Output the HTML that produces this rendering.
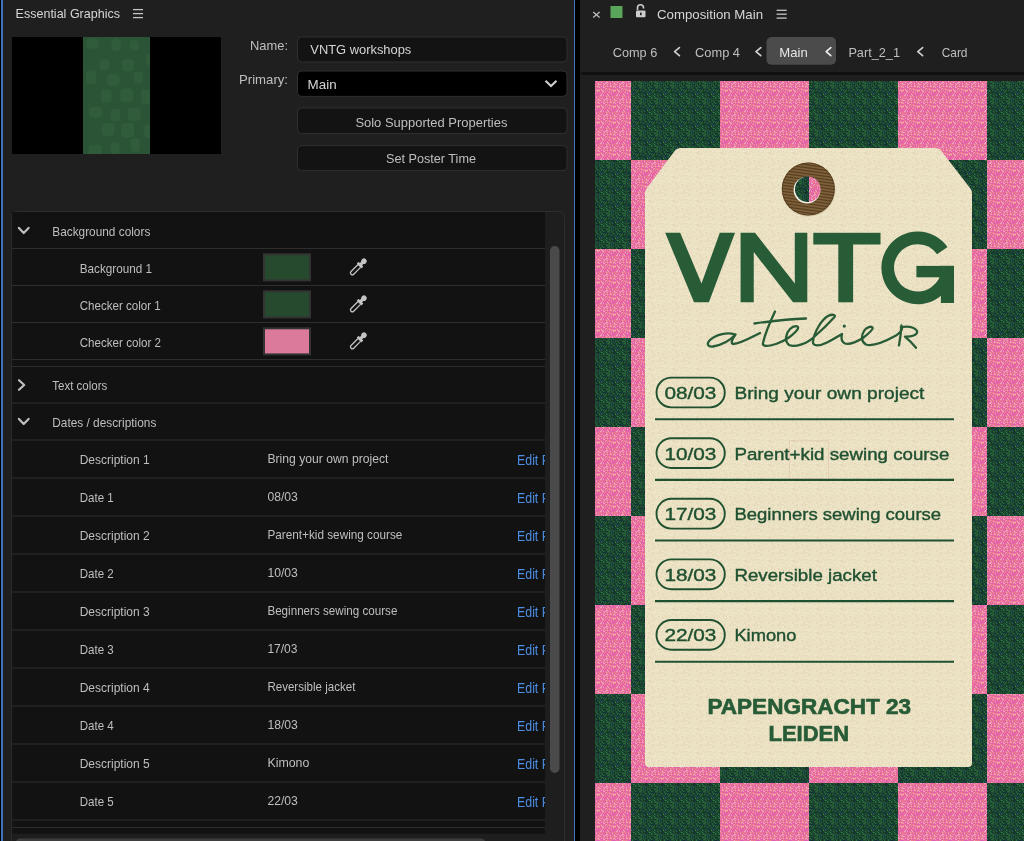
<!DOCTYPE html><html><head><meta charset="utf-8"><title>Essential Graphics</title>
<style>html,body{margin:0;padding:0;background:#000;overflow:hidden}body{width:1024px;height:841px;position:relative}svg{display:block;position:absolute;left:0;top:0;will-change:transform}text{font-family:"Liberation Sans",sans-serif}</style></head><body>
<svg width="1024" height="841" viewBox="0 0 1024 841">
<defs><pattern id="pinkTex" width="16" height="16" patternUnits="userSpaceOnUse"><rect width="16" height="16" fill="#e668a2"/><rect x="0" y="0" width="1" height="1" fill="#e872a6"/><rect x="1" y="0" width="1" height="1" fill="#ec888c"/><rect x="2" y="0" width="1" height="1" fill="#e872a6"/><rect x="3" y="0" width="1" height="1" fill="#e872a6"/><rect x="4" y="0" width="1" height="1" fill="#ec888c"/><rect x="5" y="0" width="1" height="1" fill="#e466a8"/><rect x="6" y="0" width="1" height="1" fill="#ee8484"/><rect x="7" y="0" width="1" height="1" fill="#ea7496"/><rect x="8" y="0" width="1" height="1" fill="#ec888c"/><rect x="9" y="0" width="1" height="1" fill="#e872a6"/><rect x="10" y="0" width="1" height="1" fill="#e466a8"/><rect x="11" y="0" width="1" height="1" fill="#ea7496"/><rect x="13" y="0" width="1" height="1" fill="#e872a6"/><rect x="14" y="0" width="1" height="1" fill="#f0a0c4"/><rect x="15" y="0" width="1" height="1" fill="#ea7496"/><rect x="1" y="1" width="1" height="1" fill="#ec888c"/><rect x="3" y="1" width="1" height="1" fill="#e466a8"/><rect x="4" y="1" width="1" height="1" fill="#f0a8b8"/><rect x="5" y="1" width="1" height="1" fill="#e872a6"/><rect x="6" y="1" width="1" height="1" fill="#e466a8"/><rect x="7" y="1" width="1" height="1" fill="#ea7496"/><rect x="8" y="1" width="1" height="1" fill="#e466a8"/><rect x="10" y="1" width="1" height="1" fill="#ec888c"/><rect x="14" y="1" width="1" height="1" fill="#ee8484"/><rect x="15" y="1" width="1" height="1" fill="#ee8484"/><rect x="0" y="2" width="1" height="1" fill="#e466a8"/><rect x="2" y="2" width="1" height="1" fill="#e872a6"/><rect x="3" y="2" width="1" height="1" fill="#e05cb4"/><rect x="4" y="2" width="1" height="1" fill="#e872a6"/><rect x="5" y="2" width="1" height="1" fill="#e466a8"/><rect x="6" y="2" width="1" height="1" fill="#ee8484"/><rect x="7" y="2" width="1" height="1" fill="#ec888c"/><rect x="8" y="2" width="1" height="1" fill="#ee8484"/><rect x="9" y="2" width="1" height="1" fill="#f0a0c4"/><rect x="10" y="2" width="1" height="1" fill="#e872a6"/><rect x="13" y="2" width="1" height="1" fill="#e872a6"/><rect x="14" y="2" width="1" height="1" fill="#f0a0c4"/><rect x="15" y="2" width="1" height="1" fill="#f0a8b8"/><rect x="0" y="3" width="1" height="1" fill="#ec888c"/><rect x="2" y="3" width="1" height="1" fill="#f0a0c4"/><rect x="3" y="3" width="1" height="1" fill="#e05cb4"/><rect x="4" y="3" width="1" height="1" fill="#ee8484"/><rect x="5" y="3" width="1" height="1" fill="#ec888c"/><rect x="6" y="3" width="1" height="1" fill="#f0a0c4"/><rect x="9" y="3" width="1" height="1" fill="#e466a8"/><rect x="11" y="3" width="1" height="1" fill="#f0a8b8"/><rect x="13" y="3" width="1" height="1" fill="#f0a0c4"/><rect x="14" y="3" width="1" height="1" fill="#f0a8b8"/><rect x="2" y="4" width="1" height="1" fill="#ee8484"/><rect x="3" y="4" width="1" height="1" fill="#ee8484"/><rect x="5" y="4" width="1" height="1" fill="#e872a6"/><rect x="6" y="4" width="1" height="1" fill="#f0a8b8"/><rect x="7" y="4" width="1" height="1" fill="#f0a8b8"/><rect x="8" y="4" width="1" height="1" fill="#f0a8b8"/><rect x="10" y="4" width="1" height="1" fill="#e466a8"/><rect x="11" y="4" width="1" height="1" fill="#ee8484"/><rect x="12" y="4" width="1" height="1" fill="#f0a0c4"/><rect x="13" y="4" width="1" height="1" fill="#e05cb4"/><rect x="15" y="4" width="1" height="1" fill="#f0a0c4"/><rect x="0" y="5" width="1" height="1" fill="#e05cb4"/><rect x="2" y="5" width="1" height="1" fill="#f0a8b8"/><rect x="4" y="5" width="1" height="1" fill="#ea7496"/><rect x="5" y="5" width="1" height="1" fill="#ee8484"/><rect x="9" y="5" width="1" height="1" fill="#e872a6"/><rect x="10" y="5" width="1" height="1" fill="#e872a6"/><rect x="11" y="5" width="1" height="1" fill="#ea7496"/><rect x="12" y="5" width="1" height="1" fill="#ec888c"/><rect x="13" y="5" width="1" height="1" fill="#ee8484"/><rect x="14" y="5" width="1" height="1" fill="#e872a6"/><rect x="15" y="5" width="1" height="1" fill="#ec888c"/><rect x="0" y="6" width="1" height="1" fill="#ee8484"/><rect x="1" y="6" width="1" height="1" fill="#ea7496"/><rect x="2" y="6" width="1" height="1" fill="#f0a8b8"/><rect x="3" y="6" width="1" height="1" fill="#f0a8b8"/><rect x="5" y="6" width="1" height="1" fill="#f0a8b8"/><rect x="6" y="6" width="1" height="1" fill="#f0a8b8"/><rect x="7" y="6" width="1" height="1" fill="#ee8484"/><rect x="9" y="6" width="1" height="1" fill="#f0a0c4"/><rect x="10" y="6" width="1" height="1" fill="#e466a8"/><rect x="11" y="6" width="1" height="1" fill="#f0a0c4"/><rect x="13" y="6" width="1" height="1" fill="#ee8484"/><rect x="14" y="6" width="1" height="1" fill="#ea7496"/><rect x="15" y="6" width="1" height="1" fill="#f0a8b8"/><rect x="0" y="7" width="1" height="1" fill="#e466a8"/><rect x="1" y="7" width="1" height="1" fill="#e466a8"/><rect x="4" y="7" width="1" height="1" fill="#ea7496"/><rect x="5" y="7" width="1" height="1" fill="#ee8484"/><rect x="6" y="7" width="1" height="1" fill="#e872a6"/><rect x="7" y="7" width="1" height="1" fill="#f0a0c4"/><rect x="9" y="7" width="1" height="1" fill="#e466a8"/><rect x="10" y="7" width="1" height="1" fill="#e05cb4"/><rect x="11" y="7" width="1" height="1" fill="#f0a0c4"/><rect x="12" y="7" width="1" height="1" fill="#f0a8b8"/><rect x="0" y="8" width="1" height="1" fill="#ee8484"/><rect x="1" y="8" width="1" height="1" fill="#e466a8"/><rect x="2" y="8" width="1" height="1" fill="#ee8484"/><rect x="4" y="8" width="1" height="1" fill="#e466a8"/><rect x="5" y="8" width="1" height="1" fill="#e05cb4"/><rect x="6" y="8" width="1" height="1" fill="#e05cb4"/><rect x="7" y="8" width="1" height="1" fill="#e466a8"/><rect x="8" y="8" width="1" height="1" fill="#e872a6"/><rect x="9" y="8" width="1" height="1" fill="#ea7496"/><rect x="10" y="8" width="1" height="1" fill="#e466a8"/><rect x="11" y="8" width="1" height="1" fill="#e872a6"/><rect x="12" y="8" width="1" height="1" fill="#e466a8"/><rect x="13" y="8" width="1" height="1" fill="#ea7496"/><rect x="14" y="8" width="1" height="1" fill="#f0a8b8"/><rect x="15" y="8" width="1" height="1" fill="#ea7496"/><rect x="0" y="9" width="1" height="1" fill="#ea7496"/><rect x="1" y="9" width="1" height="1" fill="#f0a0c4"/><rect x="2" y="9" width="1" height="1" fill="#ee8484"/><rect x="3" y="9" width="1" height="1" fill="#e466a8"/><rect x="4" y="9" width="1" height="1" fill="#ee8484"/><rect x="5" y="9" width="1" height="1" fill="#ee8484"/><rect x="6" y="9" width="1" height="1" fill="#ea7496"/><rect x="7" y="9" width="1" height="1" fill="#ec888c"/><rect x="8" y="9" width="1" height="1" fill="#ee8484"/><rect x="9" y="9" width="1" height="1" fill="#f0a8b8"/><rect x="10" y="9" width="1" height="1" fill="#e872a6"/><rect x="11" y="9" width="1" height="1" fill="#e466a8"/><rect x="13" y="9" width="1" height="1" fill="#f0a8b8"/><rect x="2" y="10" width="1" height="1" fill="#ec888c"/><rect x="3" y="10" width="1" height="1" fill="#f0a0c4"/><rect x="4" y="10" width="1" height="1" fill="#ee8484"/><rect x="5" y="10" width="1" height="1" fill="#f0a8b8"/><rect x="6" y="10" width="1" height="1" fill="#f0a0c4"/><rect x="7" y="10" width="1" height="1" fill="#f0a8b8"/><rect x="8" y="10" width="1" height="1" fill="#e466a8"/><rect x="9" y="10" width="1" height="1" fill="#e872a6"/><rect x="10" y="10" width="1" height="1" fill="#f0a0c4"/><rect x="11" y="10" width="1" height="1" fill="#ec888c"/><rect x="12" y="10" width="1" height="1" fill="#ea7496"/><rect x="14" y="10" width="1" height="1" fill="#ea7496"/><rect x="15" y="10" width="1" height="1" fill="#ee8484"/><rect x="0" y="11" width="1" height="1" fill="#e872a6"/><rect x="1" y="11" width="1" height="1" fill="#ec888c"/><rect x="2" y="11" width="1" height="1" fill="#e466a8"/><rect x="3" y="11" width="1" height="1" fill="#e466a8"/><rect x="5" y="11" width="1" height="1" fill="#f0a0c4"/><rect x="6" y="11" width="1" height="1" fill="#ee8484"/><rect x="7" y="11" width="1" height="1" fill="#ee8484"/><rect x="10" y="11" width="1" height="1" fill="#f0a0c4"/><rect x="11" y="11" width="1" height="1" fill="#f0a8b8"/><rect x="12" y="11" width="1" height="1" fill="#e872a6"/><rect x="13" y="11" width="1" height="1" fill="#ee8484"/><rect x="0" y="12" width="1" height="1" fill="#ea7496"/><rect x="1" y="12" width="1" height="1" fill="#f0a0c4"/><rect x="2" y="12" width="1" height="1" fill="#e05cb4"/><rect x="3" y="12" width="1" height="1" fill="#ec888c"/><rect x="4" y="12" width="1" height="1" fill="#e466a8"/><rect x="5" y="12" width="1" height="1" fill="#ea7496"/><rect x="7" y="12" width="1" height="1" fill="#e05cb4"/><rect x="8" y="12" width="1" height="1" fill="#ea7496"/><rect x="9" y="12" width="1" height="1" fill="#e872a6"/><rect x="10" y="12" width="1" height="1" fill="#e05cb4"/><rect x="11" y="12" width="1" height="1" fill="#ec888c"/><rect x="12" y="12" width="1" height="1" fill="#e466a8"/><rect x="13" y="12" width="1" height="1" fill="#ea7496"/><rect x="14" y="12" width="1" height="1" fill="#e466a8"/><rect x="1" y="13" width="1" height="1" fill="#e872a6"/><rect x="2" y="13" width="1" height="1" fill="#e05cb4"/><rect x="3" y="13" width="1" height="1" fill="#f0a0c4"/><rect x="6" y="13" width="1" height="1" fill="#e466a8"/><rect x="8" y="13" width="1" height="1" fill="#e872a6"/><rect x="10" y="13" width="1" height="1" fill="#f0a0c4"/><rect x="11" y="13" width="1" height="1" fill="#e05cb4"/><rect x="12" y="13" width="1" height="1" fill="#ea7496"/><rect x="15" y="13" width="1" height="1" fill="#e872a6"/><rect x="0" y="14" width="1" height="1" fill="#ec888c"/><rect x="1" y="14" width="1" height="1" fill="#e05cb4"/><rect x="3" y="14" width="1" height="1" fill="#ea7496"/><rect x="4" y="14" width="1" height="1" fill="#e05cb4"/><rect x="5" y="14" width="1" height="1" fill="#e05cb4"/><rect x="7" y="14" width="1" height="1" fill="#e872a6"/><rect x="9" y="14" width="1" height="1" fill="#f0a8b8"/><rect x="11" y="14" width="1" height="1" fill="#e872a6"/><rect x="12" y="14" width="1" height="1" fill="#e466a8"/><rect x="14" y="14" width="1" height="1" fill="#e466a8"/><rect x="15" y="14" width="1" height="1" fill="#f0a8b8"/><rect x="0" y="15" width="1" height="1" fill="#f0a8b8"/><rect x="1" y="15" width="1" height="1" fill="#e466a8"/><rect x="3" y="15" width="1" height="1" fill="#e466a8"/><rect x="8" y="15" width="1" height="1" fill="#f0a0c4"/><rect x="9" y="15" width="1" height="1" fill="#f0a8b8"/><rect x="10" y="15" width="1" height="1" fill="#e05cb4"/><rect x="11" y="15" width="1" height="1" fill="#f0a8b8"/><rect x="12" y="15" width="1" height="1" fill="#e466a8"/><rect x="13" y="15" width="1" height="1" fill="#e872a6"/><rect x="14" y="15" width="1" height="1" fill="#e872a6"/><rect x="15" y="15" width="1" height="1" fill="#e872a6"/></pattern><pattern id="greenTex" width="16" height="16" patternUnits="userSpaceOnUse"><rect width="16" height="16" fill="#1b4629"/><rect x="0" y="0" width="1" height="1" fill="#15344a"/><rect x="4" y="0" width="1" height="1" fill="#15344a"/><rect x="5" y="0" width="1" height="1" fill="#112e1e"/><rect x="6" y="0" width="1" height="1" fill="#112e1e"/><rect x="7" y="0" width="1" height="1" fill="#183c3c"/><rect x="8" y="0" width="1" height="1" fill="#1d5240"/><rect x="9" y="0" width="1" height="1" fill="#28653a"/><rect x="10" y="0" width="1" height="1" fill="#2c7038"/><rect x="11" y="0" width="1" height="1" fill="#15344a"/><rect x="12" y="0" width="1" height="1" fill="#20502e"/><rect x="14" y="0" width="1" height="1" fill="#2c7038"/><rect x="0" y="1" width="1" height="1" fill="#20502e"/><rect x="4" y="1" width="1" height="1" fill="#20502e"/><rect x="5" y="1" width="1" height="1" fill="#112e1e"/><rect x="7" y="1" width="1" height="1" fill="#183c3c"/><rect x="8" y="1" width="1" height="1" fill="#112e1e"/><rect x="9" y="1" width="1" height="1" fill="#1d5240"/><rect x="11" y="1" width="1" height="1" fill="#2c7038"/><rect x="14" y="1" width="1" height="1" fill="#1d5240"/><rect x="15" y="1" width="1" height="1" fill="#28653a"/><rect x="1" y="2" width="1" height="1" fill="#2c7038"/><rect x="2" y="2" width="1" height="1" fill="#1d5240"/><rect x="4" y="2" width="1" height="1" fill="#1d5240"/><rect x="6" y="2" width="1" height="1" fill="#15344a"/><rect x="7" y="2" width="1" height="1" fill="#1d5240"/><rect x="10" y="2" width="1" height="1" fill="#20502e"/><rect x="11" y="2" width="1" height="1" fill="#28653a"/><rect x="12" y="2" width="1" height="1" fill="#20502e"/><rect x="14" y="2" width="1" height="1" fill="#20502e"/><rect x="15" y="2" width="1" height="1" fill="#28653a"/><rect x="0" y="3" width="1" height="1" fill="#28653a"/><rect x="1" y="3" width="1" height="1" fill="#28653a"/><rect x="2" y="3" width="1" height="1" fill="#183c3c"/><rect x="3" y="3" width="1" height="1" fill="#1d5240"/><rect x="4" y="3" width="1" height="1" fill="#183c3c"/><rect x="5" y="3" width="1" height="1" fill="#2c7038"/><rect x="10" y="3" width="1" height="1" fill="#112e1e"/><rect x="13" y="3" width="1" height="1" fill="#15344a"/><rect x="15" y="3" width="1" height="1" fill="#15344a"/><rect x="1" y="4" width="1" height="1" fill="#1d5240"/><rect x="3" y="4" width="1" height="1" fill="#1d5240"/><rect x="4" y="4" width="1" height="1" fill="#15344a"/><rect x="5" y="4" width="1" height="1" fill="#183c3c"/><rect x="6" y="4" width="1" height="1" fill="#15344a"/><rect x="7" y="4" width="1" height="1" fill="#20502e"/><rect x="8" y="4" width="1" height="1" fill="#183c3c"/><rect x="9" y="4" width="1" height="1" fill="#2c7038"/><rect x="10" y="4" width="1" height="1" fill="#15344a"/><rect x="11" y="4" width="1" height="1" fill="#28653a"/><rect x="15" y="4" width="1" height="1" fill="#20502e"/><rect x="0" y="5" width="1" height="1" fill="#2c7038"/><rect x="1" y="5" width="1" height="1" fill="#1d5240"/><rect x="2" y="5" width="1" height="1" fill="#183c3c"/><rect x="3" y="5" width="1" height="1" fill="#28653a"/><rect x="6" y="5" width="1" height="1" fill="#112e1e"/><rect x="7" y="5" width="1" height="1" fill="#28653a"/><rect x="8" y="5" width="1" height="1" fill="#20502e"/><rect x="11" y="5" width="1" height="1" fill="#112e1e"/><rect x="12" y="5" width="1" height="1" fill="#112e1e"/><rect x="14" y="5" width="1" height="1" fill="#28653a"/><rect x="15" y="5" width="1" height="1" fill="#2c7038"/><rect x="1" y="6" width="1" height="1" fill="#2c7038"/><rect x="3" y="6" width="1" height="1" fill="#183c3c"/><rect x="4" y="6" width="1" height="1" fill="#20502e"/><rect x="6" y="6" width="1" height="1" fill="#1d5240"/><rect x="8" y="6" width="1" height="1" fill="#112e1e"/><rect x="9" y="6" width="1" height="1" fill="#20502e"/><rect x="10" y="6" width="1" height="1" fill="#2c7038"/><rect x="13" y="6" width="1" height="1" fill="#15344a"/><rect x="14" y="6" width="1" height="1" fill="#20502e"/><rect x="15" y="6" width="1" height="1" fill="#183c3c"/><rect x="0" y="7" width="1" height="1" fill="#2c7038"/><rect x="1" y="7" width="1" height="1" fill="#20502e"/><rect x="2" y="7" width="1" height="1" fill="#15344a"/><rect x="3" y="7" width="1" height="1" fill="#2c7038"/><rect x="6" y="7" width="1" height="1" fill="#183c3c"/><rect x="7" y="7" width="1" height="1" fill="#183c3c"/><rect x="8" y="7" width="1" height="1" fill="#28653a"/><rect x="9" y="7" width="1" height="1" fill="#183c3c"/><rect x="10" y="7" width="1" height="1" fill="#183c3c"/><rect x="11" y="7" width="1" height="1" fill="#2c7038"/><rect x="12" y="7" width="1" height="1" fill="#15344a"/><rect x="14" y="7" width="1" height="1" fill="#112e1e"/><rect x="15" y="7" width="1" height="1" fill="#28653a"/><rect x="1" y="8" width="1" height="1" fill="#20502e"/><rect x="2" y="8" width="1" height="1" fill="#1d5240"/><rect x="3" y="8" width="1" height="1" fill="#112e1e"/><rect x="4" y="8" width="1" height="1" fill="#28653a"/><rect x="6" y="8" width="1" height="1" fill="#112e1e"/><rect x="8" y="8" width="1" height="1" fill="#2c7038"/><rect x="9" y="8" width="1" height="1" fill="#183c3c"/><rect x="10" y="8" width="1" height="1" fill="#15344a"/><rect x="11" y="8" width="1" height="1" fill="#112e1e"/><rect x="12" y="8" width="1" height="1" fill="#112e1e"/><rect x="13" y="8" width="1" height="1" fill="#15344a"/><rect x="14" y="8" width="1" height="1" fill="#183c3c"/><rect x="0" y="9" width="1" height="1" fill="#183c3c"/><rect x="2" y="9" width="1" height="1" fill="#15344a"/><rect x="5" y="9" width="1" height="1" fill="#28653a"/><rect x="6" y="9" width="1" height="1" fill="#1d5240"/><rect x="7" y="9" width="1" height="1" fill="#183c3c"/><rect x="8" y="9" width="1" height="1" fill="#112e1e"/><rect x="9" y="9" width="1" height="1" fill="#2c7038"/><rect x="10" y="9" width="1" height="1" fill="#28653a"/><rect x="12" y="9" width="1" height="1" fill="#1d5240"/><rect x="13" y="9" width="1" height="1" fill="#183c3c"/><rect x="14" y="9" width="1" height="1" fill="#183c3c"/><rect x="0" y="10" width="1" height="1" fill="#2c7038"/><rect x="1" y="10" width="1" height="1" fill="#183c3c"/><rect x="2" y="10" width="1" height="1" fill="#20502e"/><rect x="3" y="10" width="1" height="1" fill="#20502e"/><rect x="4" y="10" width="1" height="1" fill="#15344a"/><rect x="6" y="10" width="1" height="1" fill="#1d5240"/><rect x="7" y="10" width="1" height="1" fill="#112e1e"/><rect x="9" y="10" width="1" height="1" fill="#28653a"/><rect x="10" y="10" width="1" height="1" fill="#112e1e"/><rect x="11" y="10" width="1" height="1" fill="#2c7038"/><rect x="13" y="10" width="1" height="1" fill="#28653a"/><rect x="14" y="10" width="1" height="1" fill="#20502e"/><rect x="15" y="10" width="1" height="1" fill="#112e1e"/><rect x="1" y="11" width="1" height="1" fill="#112e1e"/><rect x="2" y="11" width="1" height="1" fill="#15344a"/><rect x="3" y="11" width="1" height="1" fill="#20502e"/><rect x="5" y="11" width="1" height="1" fill="#183c3c"/><rect x="6" y="11" width="1" height="1" fill="#183c3c"/><rect x="7" y="11" width="1" height="1" fill="#28653a"/><rect x="8" y="11" width="1" height="1" fill="#183c3c"/><rect x="9" y="11" width="1" height="1" fill="#183c3c"/><rect x="10" y="11" width="1" height="1" fill="#15344a"/><rect x="11" y="11" width="1" height="1" fill="#15344a"/><rect x="13" y="11" width="1" height="1" fill="#2c7038"/><rect x="15" y="11" width="1" height="1" fill="#20502e"/><rect x="0" y="12" width="1" height="1" fill="#112e1e"/><rect x="2" y="12" width="1" height="1" fill="#20502e"/><rect x="4" y="12" width="1" height="1" fill="#112e1e"/><rect x="5" y="12" width="1" height="1" fill="#15344a"/><rect x="6" y="12" width="1" height="1" fill="#1d5240"/><rect x="7" y="12" width="1" height="1" fill="#112e1e"/><rect x="8" y="12" width="1" height="1" fill="#1d5240"/><rect x="9" y="12" width="1" height="1" fill="#15344a"/><rect x="10" y="12" width="1" height="1" fill="#15344a"/><rect x="11" y="12" width="1" height="1" fill="#1d5240"/><rect x="12" y="12" width="1" height="1" fill="#28653a"/><rect x="13" y="12" width="1" height="1" fill="#112e1e"/><rect x="15" y="12" width="1" height="1" fill="#112e1e"/><rect x="0" y="13" width="1" height="1" fill="#20502e"/><rect x="1" y="13" width="1" height="1" fill="#183c3c"/><rect x="2" y="13" width="1" height="1" fill="#15344a"/><rect x="3" y="13" width="1" height="1" fill="#183c3c"/><rect x="4" y="13" width="1" height="1" fill="#15344a"/><rect x="6" y="13" width="1" height="1" fill="#112e1e"/><rect x="7" y="13" width="1" height="1" fill="#2c7038"/><rect x="8" y="13" width="1" height="1" fill="#15344a"/><rect x="9" y="13" width="1" height="1" fill="#28653a"/><rect x="10" y="13" width="1" height="1" fill="#183c3c"/><rect x="11" y="13" width="1" height="1" fill="#1d5240"/><rect x="14" y="13" width="1" height="1" fill="#20502e"/><rect x="0" y="14" width="1" height="1" fill="#15344a"/><rect x="2" y="14" width="1" height="1" fill="#20502e"/><rect x="5" y="14" width="1" height="1" fill="#15344a"/><rect x="7" y="14" width="1" height="1" fill="#2c7038"/><rect x="9" y="14" width="1" height="1" fill="#20502e"/><rect x="11" y="14" width="1" height="1" fill="#112e1e"/><rect x="13" y="14" width="1" height="1" fill="#15344a"/><rect x="14" y="14" width="1" height="1" fill="#2c7038"/><rect x="15" y="14" width="1" height="1" fill="#1d5240"/><rect x="1" y="15" width="1" height="1" fill="#28653a"/><rect x="4" y="15" width="1" height="1" fill="#28653a"/><rect x="5" y="15" width="1" height="1" fill="#183c3c"/><rect x="6" y="15" width="1" height="1" fill="#112e1e"/><rect x="8" y="15" width="1" height="1" fill="#1d5240"/><rect x="9" y="15" width="1" height="1" fill="#15344a"/><rect x="13" y="15" width="1" height="1" fill="#28653a"/></pattern><pattern id="paperTex" width="24" height="24" patternUnits="userSpaceOnUse"><rect width="24" height="24" fill="#ebe1c3"/><rect x="0" y="0" width="1" height="1" fill="#f0e7cc"/><rect x="1" y="0" width="1" height="1" fill="#e6dbbc"/><rect x="3" y="0" width="1" height="1" fill="#eee4c8"/><rect x="4" y="0" width="1" height="1" fill="#e2d6b6"/><rect x="8" y="0" width="1" height="1" fill="#e6dbbc"/><rect x="9" y="0" width="1" height="1" fill="#eee4c8"/><rect x="10" y="0" width="1" height="1" fill="#e2d6b6"/><rect x="13" y="0" width="1" height="1" fill="#e2d6b6"/><rect x="15" y="0" width="1" height="1" fill="#e2d6b6"/><rect x="17" y="0" width="1" height="1" fill="#f0e7cc"/><rect x="23" y="0" width="1" height="1" fill="#eee4c8"/><rect x="4" y="1" width="1" height="1" fill="#e2d6b6"/><rect x="5" y="1" width="1" height="1" fill="#e2d6b6"/><rect x="8" y="1" width="1" height="1" fill="#f0e7cc"/><rect x="9" y="1" width="1" height="1" fill="#e6dbbc"/><rect x="10" y="1" width="1" height="1" fill="#e2d6b6"/><rect x="11" y="1" width="1" height="1" fill="#e2d6b6"/><rect x="13" y="1" width="1" height="1" fill="#e2d6b6"/><rect x="15" y="1" width="1" height="1" fill="#f0e7cc"/><rect x="17" y="1" width="1" height="1" fill="#e6dbbc"/><rect x="21" y="1" width="1" height="1" fill="#f0e7cc"/><rect x="23" y="1" width="1" height="1" fill="#e6dbbc"/><rect x="0" y="2" width="1" height="1" fill="#f0e7cc"/><rect x="2" y="2" width="1" height="1" fill="#e6dbbc"/><rect x="4" y="2" width="1" height="1" fill="#f0e7cc"/><rect x="5" y="2" width="1" height="1" fill="#e6dbbc"/><rect x="6" y="2" width="1" height="1" fill="#f0e7cc"/><rect x="7" y="2" width="1" height="1" fill="#eee4c8"/><rect x="8" y="2" width="1" height="1" fill="#e6dbbc"/><rect x="10" y="2" width="1" height="1" fill="#eee4c8"/><rect x="11" y="2" width="1" height="1" fill="#eee4c8"/><rect x="14" y="2" width="1" height="1" fill="#f0e7cc"/><rect x="16" y="2" width="1" height="1" fill="#e6dbbc"/><rect x="20" y="2" width="1" height="1" fill="#e6dbbc"/><rect x="23" y="2" width="1" height="1" fill="#eee4c8"/><rect x="2" y="3" width="1" height="1" fill="#e2d6b6"/><rect x="4" y="3" width="1" height="1" fill="#e2d6b6"/><rect x="5" y="3" width="1" height="1" fill="#eee4c8"/><rect x="6" y="3" width="1" height="1" fill="#e6dbbc"/><rect x="7" y="3" width="1" height="1" fill="#e6dbbc"/><rect x="8" y="3" width="1" height="1" fill="#f0e7cc"/><rect x="9" y="3" width="1" height="1" fill="#eee4c8"/><rect x="11" y="3" width="1" height="1" fill="#e6dbbc"/><rect x="12" y="3" width="1" height="1" fill="#f0e7cc"/><rect x="16" y="3" width="1" height="1" fill="#e2d6b6"/><rect x="17" y="3" width="1" height="1" fill="#e6dbbc"/><rect x="18" y="3" width="1" height="1" fill="#e6dbbc"/><rect x="20" y="3" width="1" height="1" fill="#e6dbbc"/><rect x="21" y="3" width="1" height="1" fill="#f0e7cc"/><rect x="23" y="3" width="1" height="1" fill="#f0e7cc"/><rect x="0" y="4" width="1" height="1" fill="#e6dbbc"/><rect x="1" y="4" width="1" height="1" fill="#f0e7cc"/><rect x="5" y="4" width="1" height="1" fill="#f0e7cc"/><rect x="6" y="4" width="1" height="1" fill="#eee4c8"/><rect x="12" y="4" width="1" height="1" fill="#e2d6b6"/><rect x="13" y="4" width="1" height="1" fill="#e6dbbc"/><rect x="14" y="4" width="1" height="1" fill="#f0e7cc"/><rect x="15" y="4" width="1" height="1" fill="#eee4c8"/><rect x="20" y="4" width="1" height="1" fill="#eee4c8"/><rect x="21" y="4" width="1" height="1" fill="#e6dbbc"/><rect x="22" y="4" width="1" height="1" fill="#e2d6b6"/><rect x="5" y="5" width="1" height="1" fill="#e6dbbc"/><rect x="9" y="5" width="1" height="1" fill="#f0e7cc"/><rect x="11" y="5" width="1" height="1" fill="#eee4c8"/><rect x="13" y="5" width="1" height="1" fill="#eee4c8"/><rect x="14" y="5" width="1" height="1" fill="#eee4c8"/><rect x="15" y="5" width="1" height="1" fill="#e6dbbc"/><rect x="16" y="5" width="1" height="1" fill="#eee4c8"/><rect x="17" y="5" width="1" height="1" fill="#f0e7cc"/><rect x="18" y="5" width="1" height="1" fill="#f0e7cc"/><rect x="19" y="5" width="1" height="1" fill="#eee4c8"/><rect x="1" y="6" width="1" height="1" fill="#eee4c8"/><rect x="2" y="6" width="1" height="1" fill="#e6dbbc"/><rect x="5" y="6" width="1" height="1" fill="#eee4c8"/><rect x="6" y="6" width="1" height="1" fill="#f0e7cc"/><rect x="7" y="6" width="1" height="1" fill="#e6dbbc"/><rect x="9" y="6" width="1" height="1" fill="#e6dbbc"/><rect x="11" y="6" width="1" height="1" fill="#f0e7cc"/><rect x="12" y="6" width="1" height="1" fill="#e6dbbc"/><rect x="13" y="6" width="1" height="1" fill="#f0e7cc"/><rect x="14" y="6" width="1" height="1" fill="#eee4c8"/><rect x="15" y="6" width="1" height="1" fill="#f0e7cc"/><rect x="16" y="6" width="1" height="1" fill="#f0e7cc"/><rect x="17" y="6" width="1" height="1" fill="#e6dbbc"/><rect x="20" y="6" width="1" height="1" fill="#eee4c8"/><rect x="21" y="6" width="1" height="1" fill="#f0e7cc"/><rect x="22" y="6" width="1" height="1" fill="#e6dbbc"/><rect x="23" y="6" width="1" height="1" fill="#f0e7cc"/><rect x="0" y="7" width="1" height="1" fill="#eee4c8"/><rect x="1" y="7" width="1" height="1" fill="#f0e7cc"/><rect x="2" y="7" width="1" height="1" fill="#e6dbbc"/><rect x="3" y="7" width="1" height="1" fill="#e6dbbc"/><rect x="4" y="7" width="1" height="1" fill="#f0e7cc"/><rect x="5" y="7" width="1" height="1" fill="#e6dbbc"/><rect x="7" y="7" width="1" height="1" fill="#e6dbbc"/><rect x="9" y="7" width="1" height="1" fill="#eee4c8"/><rect x="10" y="7" width="1" height="1" fill="#e6dbbc"/><rect x="11" y="7" width="1" height="1" fill="#e6dbbc"/><rect x="14" y="7" width="1" height="1" fill="#e2d6b6"/><rect x="15" y="7" width="1" height="1" fill="#e6dbbc"/><rect x="16" y="7" width="1" height="1" fill="#eee4c8"/><rect x="17" y="7" width="1" height="1" fill="#f0e7cc"/><rect x="22" y="7" width="1" height="1" fill="#f0e7cc"/><rect x="23" y="7" width="1" height="1" fill="#f0e7cc"/><rect x="1" y="8" width="1" height="1" fill="#e2d6b6"/><rect x="3" y="8" width="1" height="1" fill="#eee4c8"/><rect x="5" y="8" width="1" height="1" fill="#e2d6b6"/><rect x="8" y="8" width="1" height="1" fill="#eee4c8"/><rect x="9" y="8" width="1" height="1" fill="#e2d6b6"/><rect x="14" y="8" width="1" height="1" fill="#e6dbbc"/><rect x="16" y="8" width="1" height="1" fill="#eee4c8"/><rect x="17" y="8" width="1" height="1" fill="#e2d6b6"/><rect x="20" y="8" width="1" height="1" fill="#eee4c8"/><rect x="21" y="8" width="1" height="1" fill="#e6dbbc"/><rect x="0" y="9" width="1" height="1" fill="#e2d6b6"/><rect x="1" y="9" width="1" height="1" fill="#e2d6b6"/><rect x="2" y="9" width="1" height="1" fill="#e6dbbc"/><rect x="4" y="9" width="1" height="1" fill="#e6dbbc"/><rect x="6" y="9" width="1" height="1" fill="#f0e7cc"/><rect x="9" y="9" width="1" height="1" fill="#e6dbbc"/><rect x="11" y="9" width="1" height="1" fill="#f0e7cc"/><rect x="13" y="9" width="1" height="1" fill="#f0e7cc"/><rect x="14" y="9" width="1" height="1" fill="#e6dbbc"/><rect x="15" y="9" width="1" height="1" fill="#f0e7cc"/><rect x="16" y="9" width="1" height="1" fill="#e6dbbc"/><rect x="20" y="9" width="1" height="1" fill="#e6dbbc"/><rect x="21" y="9" width="1" height="1" fill="#eee4c8"/><rect x="1" y="10" width="1" height="1" fill="#eee4c8"/><rect x="2" y="10" width="1" height="1" fill="#e2d6b6"/><rect x="5" y="10" width="1" height="1" fill="#e6dbbc"/><rect x="9" y="10" width="1" height="1" fill="#e6dbbc"/><rect x="11" y="10" width="1" height="1" fill="#e6dbbc"/><rect x="15" y="10" width="1" height="1" fill="#e2d6b6"/><rect x="16" y="10" width="1" height="1" fill="#eee4c8"/><rect x="17" y="10" width="1" height="1" fill="#f0e7cc"/><rect x="18" y="10" width="1" height="1" fill="#eee4c8"/><rect x="22" y="10" width="1" height="1" fill="#f0e7cc"/><rect x="23" y="10" width="1" height="1" fill="#f0e7cc"/><rect x="0" y="11" width="1" height="1" fill="#eee4c8"/><rect x="1" y="11" width="1" height="1" fill="#f0e7cc"/><rect x="4" y="11" width="1" height="1" fill="#e6dbbc"/><rect x="5" y="11" width="1" height="1" fill="#f0e7cc"/><rect x="6" y="11" width="1" height="1" fill="#eee4c8"/><rect x="7" y="11" width="1" height="1" fill="#f0e7cc"/><rect x="9" y="11" width="1" height="1" fill="#eee4c8"/><rect x="12" y="11" width="1" height="1" fill="#eee4c8"/><rect x="13" y="11" width="1" height="1" fill="#e2d6b6"/><rect x="14" y="11" width="1" height="1" fill="#f0e7cc"/><rect x="19" y="11" width="1" height="1" fill="#eee4c8"/><rect x="20" y="11" width="1" height="1" fill="#f0e7cc"/><rect x="21" y="11" width="1" height="1" fill="#e2d6b6"/><rect x="22" y="11" width="1" height="1" fill="#eee4c8"/><rect x="0" y="12" width="1" height="1" fill="#e2d6b6"/><rect x="1" y="12" width="1" height="1" fill="#eee4c8"/><rect x="2" y="12" width="1" height="1" fill="#f0e7cc"/><rect x="4" y="12" width="1" height="1" fill="#f0e7cc"/><rect x="5" y="12" width="1" height="1" fill="#f0e7cc"/><rect x="6" y="12" width="1" height="1" fill="#eee4c8"/><rect x="7" y="12" width="1" height="1" fill="#eee4c8"/><rect x="11" y="12" width="1" height="1" fill="#f0e7cc"/><rect x="12" y="12" width="1" height="1" fill="#f0e7cc"/><rect x="13" y="12" width="1" height="1" fill="#e6dbbc"/><rect x="14" y="12" width="1" height="1" fill="#f0e7cc"/><rect x="16" y="12" width="1" height="1" fill="#eee4c8"/><rect x="17" y="12" width="1" height="1" fill="#e6dbbc"/><rect x="18" y="12" width="1" height="1" fill="#e6dbbc"/><rect x="22" y="12" width="1" height="1" fill="#f0e7cc"/><rect x="23" y="12" width="1" height="1" fill="#eee4c8"/><rect x="1" y="13" width="1" height="1" fill="#e2d6b6"/><rect x="5" y="13" width="1" height="1" fill="#eee4c8"/><rect x="7" y="13" width="1" height="1" fill="#eee4c8"/><rect x="9" y="13" width="1" height="1" fill="#e2d6b6"/><rect x="10" y="13" width="1" height="1" fill="#f0e7cc"/><rect x="11" y="13" width="1" height="1" fill="#eee4c8"/><rect x="13" y="13" width="1" height="1" fill="#f0e7cc"/><rect x="16" y="13" width="1" height="1" fill="#f0e7cc"/><rect x="17" y="13" width="1" height="1" fill="#eee4c8"/><rect x="18" y="13" width="1" height="1" fill="#f0e7cc"/><rect x="21" y="13" width="1" height="1" fill="#eee4c8"/><rect x="22" y="13" width="1" height="1" fill="#eee4c8"/><rect x="23" y="13" width="1" height="1" fill="#e6dbbc"/><rect x="4" y="14" width="1" height="1" fill="#e2d6b6"/><rect x="5" y="14" width="1" height="1" fill="#f0e7cc"/><rect x="9" y="14" width="1" height="1" fill="#e6dbbc"/><rect x="13" y="14" width="1" height="1" fill="#eee4c8"/><rect x="17" y="14" width="1" height="1" fill="#e2d6b6"/><rect x="20" y="14" width="1" height="1" fill="#f0e7cc"/><rect x="21" y="14" width="1" height="1" fill="#eee4c8"/><rect x="4" y="15" width="1" height="1" fill="#e2d6b6"/><rect x="9" y="15" width="1" height="1" fill="#f0e7cc"/><rect x="17" y="15" width="1" height="1" fill="#e6dbbc"/><rect x="18" y="15" width="1" height="1" fill="#eee4c8"/><rect x="19" y="15" width="1" height="1" fill="#eee4c8"/><rect x="20" y="15" width="1" height="1" fill="#e6dbbc"/><rect x="21" y="15" width="1" height="1" fill="#e6dbbc"/><rect x="0" y="16" width="1" height="1" fill="#f0e7cc"/><rect x="2" y="16" width="1" height="1" fill="#f0e7cc"/><rect x="3" y="16" width="1" height="1" fill="#e2d6b6"/><rect x="4" y="16" width="1" height="1" fill="#f0e7cc"/><rect x="6" y="16" width="1" height="1" fill="#e2d6b6"/><rect x="7" y="16" width="1" height="1" fill="#f0e7cc"/><rect x="8" y="16" width="1" height="1" fill="#f0e7cc"/><rect x="10" y="16" width="1" height="1" fill="#e2d6b6"/><rect x="11" y="16" width="1" height="1" fill="#e6dbbc"/><rect x="12" y="16" width="1" height="1" fill="#eee4c8"/><rect x="17" y="16" width="1" height="1" fill="#e6dbbc"/><rect x="22" y="16" width="1" height="1" fill="#eee4c8"/><rect x="23" y="16" width="1" height="1" fill="#e2d6b6"/><rect x="1" y="17" width="1" height="1" fill="#eee4c8"/><rect x="2" y="17" width="1" height="1" fill="#eee4c8"/><rect x="3" y="17" width="1" height="1" fill="#e6dbbc"/><rect x="10" y="17" width="1" height="1" fill="#e2d6b6"/><rect x="13" y="17" width="1" height="1" fill="#eee4c8"/><rect x="14" y="17" width="1" height="1" fill="#e2d6b6"/><rect x="17" y="17" width="1" height="1" fill="#e6dbbc"/><rect x="18" y="17" width="1" height="1" fill="#e2d6b6"/><rect x="19" y="17" width="1" height="1" fill="#f0e7cc"/><rect x="20" y="17" width="1" height="1" fill="#e6dbbc"/><rect x="21" y="17" width="1" height="1" fill="#e6dbbc"/><rect x="1" y="18" width="1" height="1" fill="#e6dbbc"/><rect x="2" y="18" width="1" height="1" fill="#f0e7cc"/><rect x="4" y="18" width="1" height="1" fill="#e6dbbc"/><rect x="6" y="18" width="1" height="1" fill="#e2d6b6"/><rect x="14" y="18" width="1" height="1" fill="#e2d6b6"/><rect x="15" y="18" width="1" height="1" fill="#e2d6b6"/><rect x="17" y="18" width="1" height="1" fill="#eee4c8"/><rect x="18" y="18" width="1" height="1" fill="#eee4c8"/><rect x="19" y="18" width="1" height="1" fill="#e6dbbc"/><rect x="22" y="18" width="1" height="1" fill="#eee4c8"/><rect x="23" y="18" width="1" height="1" fill="#f0e7cc"/><rect x="1" y="19" width="1" height="1" fill="#e6dbbc"/><rect x="2" y="19" width="1" height="1" fill="#eee4c8"/><rect x="3" y="19" width="1" height="1" fill="#eee4c8"/><rect x="5" y="19" width="1" height="1" fill="#e2d6b6"/><rect x="9" y="19" width="1" height="1" fill="#e6dbbc"/><rect x="11" y="19" width="1" height="1" fill="#eee4c8"/><rect x="13" y="19" width="1" height="1" fill="#f0e7cc"/><rect x="15" y="19" width="1" height="1" fill="#f0e7cc"/><rect x="17" y="19" width="1" height="1" fill="#f0e7cc"/><rect x="18" y="19" width="1" height="1" fill="#e2d6b6"/><rect x="20" y="19" width="1" height="1" fill="#eee4c8"/><rect x="22" y="19" width="1" height="1" fill="#e6dbbc"/><rect x="23" y="19" width="1" height="1" fill="#e6dbbc"/><rect x="0" y="20" width="1" height="1" fill="#e6dbbc"/><rect x="3" y="20" width="1" height="1" fill="#eee4c8"/><rect x="4" y="20" width="1" height="1" fill="#eee4c8"/><rect x="7" y="20" width="1" height="1" fill="#e6dbbc"/><rect x="8" y="20" width="1" height="1" fill="#f0e7cc"/><rect x="9" y="20" width="1" height="1" fill="#eee4c8"/><rect x="10" y="20" width="1" height="1" fill="#e2d6b6"/><rect x="13" y="20" width="1" height="1" fill="#e2d6b6"/><rect x="15" y="20" width="1" height="1" fill="#e2d6b6"/><rect x="18" y="20" width="1" height="1" fill="#e6dbbc"/><rect x="19" y="20" width="1" height="1" fill="#f0e7cc"/><rect x="21" y="20" width="1" height="1" fill="#eee4c8"/><rect x="22" y="20" width="1" height="1" fill="#e6dbbc"/><rect x="23" y="20" width="1" height="1" fill="#f0e7cc"/><rect x="1" y="21" width="1" height="1" fill="#eee4c8"/><rect x="3" y="21" width="1" height="1" fill="#e2d6b6"/><rect x="5" y="21" width="1" height="1" fill="#e2d6b6"/><rect x="8" y="21" width="1" height="1" fill="#f0e7cc"/><rect x="10" y="21" width="1" height="1" fill="#eee4c8"/><rect x="12" y="21" width="1" height="1" fill="#eee4c8"/><rect x="17" y="21" width="1" height="1" fill="#e6dbbc"/><rect x="20" y="21" width="1" height="1" fill="#e2d6b6"/><rect x="21" y="21" width="1" height="1" fill="#eee4c8"/><rect x="23" y="21" width="1" height="1" fill="#eee4c8"/><rect x="1" y="22" width="1" height="1" fill="#e2d6b6"/><rect x="3" y="22" width="1" height="1" fill="#eee4c8"/><rect x="7" y="22" width="1" height="1" fill="#f0e7cc"/><rect x="9" y="22" width="1" height="1" fill="#eee4c8"/><rect x="10" y="22" width="1" height="1" fill="#f0e7cc"/><rect x="13" y="22" width="1" height="1" fill="#e2d6b6"/><rect x="16" y="22" width="1" height="1" fill="#e2d6b6"/><rect x="17" y="22" width="1" height="1" fill="#e2d6b6"/><rect x="19" y="22" width="1" height="1" fill="#e6dbbc"/><rect x="0" y="23" width="1" height="1" fill="#e2d6b6"/><rect x="2" y="23" width="1" height="1" fill="#eee4c8"/><rect x="3" y="23" width="1" height="1" fill="#e6dbbc"/><rect x="4" y="23" width="1" height="1" fill="#eee4c8"/><rect x="9" y="23" width="1" height="1" fill="#f0e7cc"/><rect x="10" y="23" width="1" height="1" fill="#eee4c8"/><rect x="11" y="23" width="1" height="1" fill="#e2d6b6"/><rect x="14" y="23" width="1" height="1" fill="#f0e7cc"/><rect x="15" y="23" width="1" height="1" fill="#eee4c8"/><rect x="17" y="23" width="1" height="1" fill="#f0e7cc"/><rect x="19" y="23" width="1" height="1" fill="#e6dbbc"/><rect x="23" y="23" width="1" height="1" fill="#eee4c8"/></pattern>
<clipPath id="compClip"><rect x="595" y="81" width="429" height="760"/></clipPath>
<clipPath id="rowsClip"><rect x="12" y="212" width="533" height="621"/></clipPath>
<clipPath id="holeClip"><circle cx="807.7" cy="189.3" r="12.7"/></clipPath>
</defs>
<rect x="0.00" y="0.00" width="1024.00" height="841.00" fill="#000"/>
<rect x="3.00" y="0.00" width="571.00" height="841.00" fill="#1f1f1f"/>
<rect x="1.00" y="0.00" width="2.00" height="841.00" fill="#4272ba"/>
<rect x="574.00" y="0.00" width="1.00" height="841.00" fill="#4272ba"/>
<text x="15.60" y="18.00" font-size="13.6" fill="#d6d6d6" textLength="104.40" lengthAdjust="spacingAndGlyphs">Essential Graphics</text>
<line x1="133.00" y1="9.60" x2="143.00" y2="9.60" stroke="#c4c4c4" stroke-width="1.3"/>
<line x1="133.00" y1="13.60" x2="143.00" y2="13.60" stroke="#c4c4c4" stroke-width="1.3"/>
<line x1="133.00" y1="17.60" x2="143.00" y2="17.60" stroke="#c4c4c4" stroke-width="1.3"/>
<rect x="12.00" y="37.00" width="209.00" height="117.00" fill="#000"/>
<rect x="83.00" y="37.00" width="67.00" height="117.00" fill="#2b5436"/>
<clipPath id="prevClip"><rect x="83" y="37" width="67" height="117"/></clipPath><g clip-path="url(#prevClip)" fill="#3a6846">
<rect x="86.5" y="38.2" width="12.3" height="10.4" rx="4" opacity="0.4"/>
<rect x="111.6" y="38.4" width="9.3" height="12.5" rx="4" opacity="0.4"/>
<rect x="129.6" y="39.9" width="9.3" height="10.5" rx="4" opacity="0.4"/>
<rect x="99.6" y="58.9" width="9.6" height="11.1" rx="4" opacity="0.4"/>
<rect x="122.1" y="59.2" width="11.9" height="12.0" rx="4" opacity="0.4"/>
<rect x="146.2" y="54.1" width="13.3" height="11.4" rx="4" opacity="0.4"/>
<rect x="85.9" y="70.2" width="10.5" height="14.1" rx="4" opacity="0.4"/>
<rect x="107.3" y="74.1" width="12.2" height="11.9" rx="4" opacity="0.4"/>
<rect x="133.7" y="71.4" width="9.3" height="11.0" rx="4" opacity="0.4"/>
<rect x="101.2" y="89.6" width="10.6" height="12.9" rx="4" opacity="0.4"/>
<rect x="120.1" y="88.6" width="13.0" height="13.5" rx="4" opacity="0.4"/>
<rect x="141.1" y="89.8" width="11.6" height="14.4" rx="4" opacity="0.4"/>
<rect x="88.9" y="106.9" width="13.9" height="10.6" rx="4" opacity="0.4"/>
<rect x="110.5" y="108.8" width="9.8" height="12.4" rx="4" opacity="0.4"/>
<rect x="127.9" y="108.1" width="12.8" height="12.9" rx="4" opacity="0.4"/>
<rect x="101.8" y="122.9" width="12.5" height="13.0" rx="4" opacity="0.4"/>
<rect x="121.0" y="122.9" width="13.2" height="14.7" rx="4" opacity="0.4"/>
<rect x="144.1" y="124.7" width="9.3" height="13.5" rx="4" opacity="0.4"/>
<rect x="88.6" y="144.7" width="13.1" height="11.4" rx="4" opacity="0.4"/>
<rect x="110.5" y="142.4" width="9.1" height="12.3" rx="4" opacity="0.4"/>
<rect x="130.7" y="138.3" width="9.3" height="13.8" rx="4" opacity="0.4"/>
</g>
<text x="250.00" y="50.20" font-size="13.4" fill="#bfbfbf" textLength="38.00" lengthAdjust="spacingAndGlyphs">Name:</text>
<text x="239.00" y="84.40" font-size="13.4" fill="#bfbfbf" textLength="49.00" lengthAdjust="spacingAndGlyphs">Primary:</text>
<rect x="297.50" y="37.00" width="269.50" height="25.00" fill="#131313" rx="4" stroke="#303030" stroke-width="1"/>
<text x="310.30" y="53.50" font-size="13.4" fill="#d6d6d6" textLength="101.00" lengthAdjust="spacingAndGlyphs">VNTG workshops</text>
<rect x="297.50" y="71.00" width="269.50" height="25.40" fill="#000" rx="4" stroke="#303030" stroke-width="1"/>
<text x="307.60" y="88.90" font-size="13.4" fill="#d6d6d6" textLength="29.00" lengthAdjust="spacingAndGlyphs">Main</text>
<polyline points="545.5,80.8 551,86 556.5,80.8" fill="none" stroke="#d2d2d2" stroke-width="2"/>
<rect x="297.50" y="108.00" width="269.50" height="25.50" fill="#131313" rx="4" stroke="#303030" stroke-width="1"/>
<text x="355.40" y="127.20" font-size="13.4" fill="#bfbfbf" textLength="152.00" lengthAdjust="spacingAndGlyphs">Solo Supported Properties</text>
<rect x="297.50" y="145.60" width="269.50" height="25.00" fill="#131313" rx="4" stroke="#303030" stroke-width="1"/>
<text x="386.00" y="163.40" font-size="13.4" fill="#bfbfbf" textLength="90.00" lengthAdjust="spacingAndGlyphs">Set Poster Time</text>
<rect x="11.60" y="211.50" width="552.90" height="658.50" fill="#1e1e1e" rx="5" stroke="#2d2d2d" stroke-width="1"/>
<rect x="12.20" y="212.00" width="532.80" height="621.70" fill="#121212"/>
<rect x="550.00" y="246.00" width="9.50" height="527.00" fill="#4a4a4a" rx="4.75"/>
<rect x="16.00" y="838.50" width="469.00" height="7.50" fill="#3e3e3e" rx="4"/>
<g clip-path="url(#rowsClip)">
<line x1="12.20" y1="248.50" x2="545.00" y2="248.50" stroke="#2e2e2e" stroke-width="1.1"/>
<line x1="12.20" y1="285.50" x2="545.00" y2="285.50" stroke="#2e2e2e" stroke-width="1.1"/>
<line x1="12.20" y1="322.50" x2="545.00" y2="322.50" stroke="#2e2e2e" stroke-width="1.1"/>
<line x1="12.20" y1="359.50" x2="545.00" y2="359.50" stroke="#2e2e2e" stroke-width="1.1"/>
<line x1="12.20" y1="366.50" x2="545.00" y2="366.50" stroke="#2e2e2e" stroke-width="1.1"/>
<line x1="12.20" y1="403.00" x2="545.00" y2="403.00" stroke="#2e2e2e" stroke-width="1.1"/>
<line x1="12.20" y1="440.00" x2="545.00" y2="440.00" stroke="#2e2e2e" stroke-width="1.1"/>
<line x1="12.20" y1="478.00" x2="545.00" y2="478.00" stroke="#2e2e2e" stroke-width="1.1"/>
<line x1="12.20" y1="516.00" x2="545.00" y2="516.00" stroke="#2e2e2e" stroke-width="1.1"/>
<line x1="12.20" y1="554.00" x2="545.00" y2="554.00" stroke="#2e2e2e" stroke-width="1.1"/>
<line x1="12.20" y1="592.00" x2="545.00" y2="592.00" stroke="#2e2e2e" stroke-width="1.1"/>
<line x1="12.20" y1="630.00" x2="545.00" y2="630.00" stroke="#2e2e2e" stroke-width="1.1"/>
<line x1="12.20" y1="668.00" x2="545.00" y2="668.00" stroke="#2e2e2e" stroke-width="1.1"/>
<line x1="12.20" y1="706.00" x2="545.00" y2="706.00" stroke="#2e2e2e" stroke-width="1.1"/>
<line x1="12.20" y1="744.00" x2="545.00" y2="744.00" stroke="#2e2e2e" stroke-width="1.1"/>
<line x1="12.20" y1="782.00" x2="545.00" y2="782.00" stroke="#2e2e2e" stroke-width="1.1"/>
<line x1="12.20" y1="820.00" x2="545.00" y2="820.00" stroke="#2e2e2e" stroke-width="1.1"/>
<line x1="12.20" y1="858.00" x2="545.00" y2="858.00" stroke="#2e2e2e" stroke-width="1.1"/>
<line x1="12.20" y1="827.50" x2="545.00" y2="827.50" stroke="#2e2e2e" stroke-width="1.1"/>
<polyline points="18.90,227.90 23.70,233.00 28.60,227.90" fill="none" stroke="#bfbfbf" stroke-width="2.2" stroke-linecap="round" stroke-linejoin="round"/>
<text x="52.30" y="236.00" font-size="13.4" fill="#bfbfbf" textLength="98.00" lengthAdjust="spacingAndGlyphs">Background colors</text>
<polyline points="19.00,380.20 24.20,385.00 19.00,389.80" fill="none" stroke="#bfbfbf" stroke-width="2.2" stroke-linecap="round" stroke-linejoin="round"/>
<text x="52.30" y="390.00" font-size="13.4" fill="#bfbfbf" textLength="55.00" lengthAdjust="spacingAndGlyphs">Text colors</text>
<polyline points="18.90,418.90 23.70,424.00 28.60,418.90" fill="none" stroke="#bfbfbf" stroke-width="2.2" stroke-linecap="round" stroke-linejoin="round"/>
<text x="52.30" y="427.10" font-size="13.4" fill="#bfbfbf" textLength="104.00" lengthAdjust="spacingAndGlyphs">Dates / descriptions</text>
<text x="79.70" y="272.80" font-size="13.4" fill="#bfbfbf" textLength="72.30" lengthAdjust="spacingAndGlyphs">Background 1</text>
<rect x="263.00" y="253.30" width="48.00" height="28.10" fill="#333333"/>
<rect x="265.00" y="255.30" width="44.00" height="24.10" fill="#264a2e"/>
<g transform="translate(357.6,267.60) rotate(45)" fill="#c4c4c4"><circle cx="0" cy="-9" r="2.7"/><rect x="-1.6" y="-8" width="3.2" height="5"/><rect x="-3.4" y="-4.8" width="6.8" height="2.8" rx="0.7"/><path d="M-1.9,-2.2 V7.4 A1.9,1.9 0 0 0 1.9,7.4 V-2.2" fill="none" stroke="#c4c4c4" stroke-width="1.3"/></g>
<text x="79.70" y="309.80" font-size="13.4" fill="#bfbfbf" textLength="81.00" lengthAdjust="spacingAndGlyphs">Checker color 1</text>
<rect x="263.00" y="290.30" width="48.00" height="28.10" fill="#333333"/>
<rect x="265.00" y="292.30" width="44.00" height="24.10" fill="#264a2e"/>
<g transform="translate(357.6,304.60) rotate(45)" fill="#c4c4c4"><circle cx="0" cy="-9" r="2.7"/><rect x="-1.6" y="-8" width="3.2" height="5"/><rect x="-3.4" y="-4.8" width="6.8" height="2.8" rx="0.7"/><path d="M-1.9,-2.2 V7.4 A1.9,1.9 0 0 0 1.9,7.4 V-2.2" fill="none" stroke="#c4c4c4" stroke-width="1.3"/></g>
<text x="79.70" y="346.80" font-size="13.4" fill="#bfbfbf" textLength="81.30" lengthAdjust="spacingAndGlyphs">Checker color 2</text>
<rect x="263.00" y="327.30" width="48.00" height="28.10" fill="#333333"/>
<rect x="265.00" y="329.30" width="44.00" height="24.10" fill="#dc7a9c"/>
<g transform="translate(357.6,341.60) rotate(45)" fill="#c4c4c4"><circle cx="0" cy="-9" r="2.7"/><rect x="-1.6" y="-8" width="3.2" height="5"/><rect x="-3.4" y="-4.8" width="6.8" height="2.8" rx="0.7"/><path d="M-1.9,-2.2 V7.4 A1.9,1.9 0 0 0 1.9,7.4 V-2.2" fill="none" stroke="#c4c4c4" stroke-width="1.3"/></g>
<text x="79.70" y="463.80" font-size="13.4" fill="#bfbfbf" textLength="70.00" lengthAdjust="spacingAndGlyphs">Description 1</text>
<text x="267.40" y="462.80" font-size="12.6" fill="#bfbfbf" textLength="121.00" lengthAdjust="spacingAndGlyphs">Bring your own project</text>
<text x="517.00" y="464.90" font-size="14" fill="#4b8ee3" textLength="33.00" lengthAdjust="spacingAndGlyphs">Edit P</text>
<text x="79.70" y="501.80" font-size="13.4" fill="#bfbfbf" textLength="34.00" lengthAdjust="spacingAndGlyphs">Date 1</text>
<text x="267.40" y="500.80" font-size="12.6" fill="#bfbfbf" textLength="30.40" lengthAdjust="spacingAndGlyphs">08/03</text>
<text x="517.00" y="502.90" font-size="14" fill="#4b8ee3" textLength="33.00" lengthAdjust="spacingAndGlyphs">Edit P</text>
<text x="79.70" y="539.80" font-size="13.4" fill="#bfbfbf" textLength="70.00" lengthAdjust="spacingAndGlyphs">Description 2</text>
<text x="267.40" y="538.80" font-size="12.6" fill="#bfbfbf" textLength="135.00" lengthAdjust="spacingAndGlyphs">Parent+kid sewing course</text>
<text x="517.00" y="540.90" font-size="14" fill="#4b8ee3" textLength="33.00" lengthAdjust="spacingAndGlyphs">Edit P</text>
<text x="79.70" y="577.80" font-size="13.4" fill="#bfbfbf" textLength="34.00" lengthAdjust="spacingAndGlyphs">Date 2</text>
<text x="267.40" y="576.80" font-size="12.6" fill="#bfbfbf" textLength="30.40" lengthAdjust="spacingAndGlyphs">10/03</text>
<text x="517.00" y="578.90" font-size="14" fill="#4b8ee3" textLength="33.00" lengthAdjust="spacingAndGlyphs">Edit P</text>
<text x="79.70" y="615.80" font-size="13.4" fill="#bfbfbf" textLength="70.00" lengthAdjust="spacingAndGlyphs">Description 3</text>
<text x="267.40" y="614.80" font-size="12.6" fill="#bfbfbf" textLength="130.00" lengthAdjust="spacingAndGlyphs">Beginners sewing course</text>
<text x="517.00" y="616.90" font-size="14" fill="#4b8ee3" textLength="33.00" lengthAdjust="spacingAndGlyphs">Edit P</text>
<text x="79.70" y="653.80" font-size="13.4" fill="#bfbfbf" textLength="34.00" lengthAdjust="spacingAndGlyphs">Date 3</text>
<text x="267.40" y="652.80" font-size="12.6" fill="#bfbfbf" textLength="30.00" lengthAdjust="spacingAndGlyphs">17/03</text>
<text x="517.00" y="654.90" font-size="14" fill="#4b8ee3" textLength="33.00" lengthAdjust="spacingAndGlyphs">Edit P</text>
<text x="79.70" y="691.80" font-size="13.4" fill="#bfbfbf" textLength="70.00" lengthAdjust="spacingAndGlyphs">Description 4</text>
<text x="267.40" y="690.80" font-size="12.6" fill="#bfbfbf" textLength="88.00" lengthAdjust="spacingAndGlyphs">Reversible jacket</text>
<text x="517.00" y="692.90" font-size="14" fill="#4b8ee3" textLength="33.00" lengthAdjust="spacingAndGlyphs">Edit P</text>
<text x="79.70" y="729.80" font-size="13.4" fill="#bfbfbf" textLength="34.00" lengthAdjust="spacingAndGlyphs">Date 4</text>
<text x="267.40" y="728.80" font-size="12.6" fill="#bfbfbf" textLength="30.40" lengthAdjust="spacingAndGlyphs">18/03</text>
<text x="517.00" y="730.90" font-size="14" fill="#4b8ee3" textLength="33.00" lengthAdjust="spacingAndGlyphs">Edit P</text>
<text x="79.70" y="767.80" font-size="13.4" fill="#bfbfbf" textLength="70.00" lengthAdjust="spacingAndGlyphs">Description 5</text>
<text x="267.40" y="766.80" font-size="12.6" fill="#bfbfbf" textLength="42.00" lengthAdjust="spacingAndGlyphs">Kimono</text>
<text x="517.00" y="768.90" font-size="14" fill="#4b8ee3" textLength="33.00" lengthAdjust="spacingAndGlyphs">Edit P</text>
<text x="79.70" y="805.80" font-size="13.4" fill="#bfbfbf" textLength="34.00" lengthAdjust="spacingAndGlyphs">Date 5</text>
<text x="267.40" y="804.80" font-size="12.6" fill="#bfbfbf" textLength="30.40" lengthAdjust="spacingAndGlyphs">22/03</text>
<text x="517.00" y="806.90" font-size="14" fill="#4b8ee3" textLength="33.00" lengthAdjust="spacingAndGlyphs">Edit P</text>
</g>
<rect x="580.00" y="0.00" width="444.00" height="841.00" fill="#1f1f1f"/>
<rect x="581.00" y="72.00" width="443.00" height="3.00" fill="#101010"/>
<path d="M593.2,12 L599.6,17.6 M599.6,12 L593.2,17.6" stroke="#bdbdbd" stroke-width="1.3"/>
<rect x="610.50" y="6.00" width="12.00" height="12.00" fill="#5aa65a"/>
<path d="M637.5,10 v-2.2 a3,3 0 0 1 6,0 v0.6" fill="none" stroke="#cdcdcd" stroke-width="1.6"/>
<rect x="636.00" y="10.50" width="9.50" height="6.70" fill="#cdcdcd" rx="1"/>
<rect x="640.00" y="12.60" width="1.60" height="2.60" fill="#1f1f1f"/>
<text x="657.00" y="18.90" font-size="13.6" fill="#d6d6d6" textLength="106.00" lengthAdjust="spacingAndGlyphs">Composition Main</text>
<line x1="776.60" y1="10.30" x2="786.70" y2="10.30" stroke="#c4c4c4" stroke-width="1.3"/>
<line x1="776.60" y1="14.20" x2="786.70" y2="14.20" stroke="#c4c4c4" stroke-width="1.3"/>
<line x1="776.60" y1="18.10" x2="786.70" y2="18.10" stroke="#c4c4c4" stroke-width="1.3"/>
<text x="612.70" y="57.00" font-size="13.6" fill="#bfbfbf" textLength="44.60" lengthAdjust="spacingAndGlyphs">Comp 6</text>
<polyline points="679.40,47.60 674.60,51.60 679.40,55.60" fill="none" stroke="#cfcfcf" stroke-width="1.7" stroke-linecap="round" stroke-linejoin="round"/>
<text x="695.00" y="57.00" font-size="13.6" fill="#bfbfbf" textLength="45.00" lengthAdjust="spacingAndGlyphs">Comp 4</text>
<polyline points="760.80,47.60 756.00,51.60 760.80,55.60" fill="none" stroke="#cfcfcf" stroke-width="1.7" stroke-linecap="round" stroke-linejoin="round"/>
<rect x="766.50" y="37.00" width="69.50" height="27.80" fill="#4b4b4b" rx="5"/>
<text x="779.30" y="57.00" font-size="13.6" fill="#e6e6e6" textLength="28.40" lengthAdjust="spacingAndGlyphs">Main</text>
<polyline points="830.80,47.60 826.20,51.60 830.80,55.60" fill="none" stroke="#eeeeee" stroke-width="1.7" stroke-linecap="round" stroke-linejoin="round"/>
<text x="848.40" y="57.00" font-size="13.6" fill="#bfbfbf" textLength="51.60" lengthAdjust="spacingAndGlyphs">Part_2_1</text>
<polyline points="922.60,47.60 917.80,51.60 922.60,55.60" fill="none" stroke="#cfcfcf" stroke-width="1.7" stroke-linecap="round" stroke-linejoin="round"/>
<text x="941.70" y="57.00" font-size="13.6" fill="#bfbfbf" textLength="25.80" lengthAdjust="spacingAndGlyphs">Card</text>
<g clip-path="url(#compClip)">
<rect x="542.00" y="71.00" width="89.00" height="89.00" fill="url(#pinkTex)"/>
<rect x="631.00" y="71.00" width="89.00" height="89.00" fill="url(#greenTex)"/>
<rect x="720.00" y="71.00" width="89.00" height="89.00" fill="url(#pinkTex)"/>
<rect x="809.00" y="71.00" width="89.00" height="89.00" fill="url(#greenTex)"/>
<rect x="898.00" y="71.00" width="89.00" height="89.00" fill="url(#pinkTex)"/>
<rect x="987.00" y="71.00" width="89.00" height="89.00" fill="url(#greenTex)"/>
<rect x="542.00" y="160.00" width="89.00" height="89.00" fill="url(#greenTex)"/>
<rect x="631.00" y="160.00" width="89.00" height="89.00" fill="url(#pinkTex)"/>
<rect x="720.00" y="160.00" width="89.00" height="89.00" fill="url(#greenTex)"/>
<rect x="809.00" y="160.00" width="89.00" height="89.00" fill="url(#pinkTex)"/>
<rect x="898.00" y="160.00" width="89.00" height="89.00" fill="url(#greenTex)"/>
<rect x="987.00" y="160.00" width="89.00" height="89.00" fill="url(#pinkTex)"/>
<rect x="542.00" y="249.00" width="89.00" height="89.00" fill="url(#pinkTex)"/>
<rect x="631.00" y="249.00" width="89.00" height="89.00" fill="url(#greenTex)"/>
<rect x="720.00" y="249.00" width="89.00" height="89.00" fill="url(#pinkTex)"/>
<rect x="809.00" y="249.00" width="89.00" height="89.00" fill="url(#greenTex)"/>
<rect x="898.00" y="249.00" width="89.00" height="89.00" fill="url(#pinkTex)"/>
<rect x="987.00" y="249.00" width="89.00" height="89.00" fill="url(#greenTex)"/>
<rect x="542.00" y="338.00" width="89.00" height="89.00" fill="url(#greenTex)"/>
<rect x="631.00" y="338.00" width="89.00" height="89.00" fill="url(#pinkTex)"/>
<rect x="720.00" y="338.00" width="89.00" height="89.00" fill="url(#greenTex)"/>
<rect x="809.00" y="338.00" width="89.00" height="89.00" fill="url(#pinkTex)"/>
<rect x="898.00" y="338.00" width="89.00" height="89.00" fill="url(#greenTex)"/>
<rect x="987.00" y="338.00" width="89.00" height="89.00" fill="url(#pinkTex)"/>
<rect x="542.00" y="427.00" width="89.00" height="89.00" fill="url(#pinkTex)"/>
<rect x="631.00" y="427.00" width="89.00" height="89.00" fill="url(#greenTex)"/>
<rect x="720.00" y="427.00" width="89.00" height="89.00" fill="url(#pinkTex)"/>
<rect x="809.00" y="427.00" width="89.00" height="89.00" fill="url(#greenTex)"/>
<rect x="898.00" y="427.00" width="89.00" height="89.00" fill="url(#pinkTex)"/>
<rect x="987.00" y="427.00" width="89.00" height="89.00" fill="url(#greenTex)"/>
<rect x="542.00" y="516.00" width="89.00" height="89.00" fill="url(#greenTex)"/>
<rect x="631.00" y="516.00" width="89.00" height="89.00" fill="url(#pinkTex)"/>
<rect x="720.00" y="516.00" width="89.00" height="89.00" fill="url(#greenTex)"/>
<rect x="809.00" y="516.00" width="89.00" height="89.00" fill="url(#pinkTex)"/>
<rect x="898.00" y="516.00" width="89.00" height="89.00" fill="url(#greenTex)"/>
<rect x="987.00" y="516.00" width="89.00" height="89.00" fill="url(#pinkTex)"/>
<rect x="542.00" y="605.00" width="89.00" height="89.00" fill="url(#pinkTex)"/>
<rect x="631.00" y="605.00" width="89.00" height="89.00" fill="url(#greenTex)"/>
<rect x="720.00" y="605.00" width="89.00" height="89.00" fill="url(#pinkTex)"/>
<rect x="809.00" y="605.00" width="89.00" height="89.00" fill="url(#greenTex)"/>
<rect x="898.00" y="605.00" width="89.00" height="89.00" fill="url(#pinkTex)"/>
<rect x="987.00" y="605.00" width="89.00" height="89.00" fill="url(#greenTex)"/>
<rect x="542.00" y="694.00" width="89.00" height="89.00" fill="url(#greenTex)"/>
<rect x="631.00" y="694.00" width="89.00" height="89.00" fill="url(#pinkTex)"/>
<rect x="720.00" y="694.00" width="89.00" height="89.00" fill="url(#greenTex)"/>
<rect x="809.00" y="694.00" width="89.00" height="89.00" fill="url(#pinkTex)"/>
<rect x="898.00" y="694.00" width="89.00" height="89.00" fill="url(#greenTex)"/>
<rect x="987.00" y="694.00" width="89.00" height="89.00" fill="url(#pinkTex)"/>
<rect x="542.00" y="783.00" width="89.00" height="89.00" fill="url(#pinkTex)"/>
<rect x="631.00" y="783.00" width="89.00" height="89.00" fill="url(#greenTex)"/>
<rect x="720.00" y="783.00" width="89.00" height="89.00" fill="url(#pinkTex)"/>
<rect x="809.00" y="783.00" width="89.00" height="89.00" fill="url(#greenTex)"/>
<rect x="898.00" y="783.00" width="89.00" height="89.00" fill="url(#pinkTex)"/>
<rect x="987.00" y="783.00" width="89.00" height="89.00" fill="url(#greenTex)"/>
</g>
<path d="M680,148 L936,148 Q939,148 941,150.5 L970,188 Q972,190.5 972,193 L972,763 Q972,767 968,767 L649,767 Q645,767 645,763 L645,193 Q645,190.5 647,188 L675,150.5 Q677,148 680,148 Z" fill="url(#paperTex)"/>
<circle cx="808.6" cy="189.6" r="27" fill="#c9bb98" opacity="0.6"/>
<circle cx="808.3" cy="189" r="26.5" fill="#7f6139"/>
<clipPath id="eyeClip"><circle cx="808.3" cy="189" r="26.5"/></clipPath>
<g clip-path="url(#eyeClip)">
<line x1="780" y1="149" x2="837" y2="157" stroke="#3f2c15" stroke-width="1.2" opacity="0.6"/>
<line x1="780" y1="152" x2="837" y2="160" stroke="#3f2c15" stroke-width="1.2" opacity="0.6"/>
<line x1="780" y1="155" x2="837" y2="163" stroke="#3f2c15" stroke-width="1.2" opacity="0.6"/>
<line x1="780" y1="158" x2="837" y2="166" stroke="#3f2c15" stroke-width="1.2" opacity="0.6"/>
<line x1="780" y1="161" x2="837" y2="169" stroke="#3f2c15" stroke-width="1.2" opacity="0.6"/>
<line x1="780" y1="164" x2="837" y2="172" stroke="#3f2c15" stroke-width="1.2" opacity="0.6"/>
<line x1="780" y1="167" x2="837" y2="175" stroke="#3f2c15" stroke-width="1.2" opacity="0.6"/>
<line x1="780" y1="170" x2="837" y2="178" stroke="#3f2c15" stroke-width="1.2" opacity="0.6"/>
<line x1="780" y1="173" x2="837" y2="181" stroke="#3f2c15" stroke-width="1.2" opacity="0.6"/>
<line x1="780" y1="176" x2="837" y2="184" stroke="#3f2c15" stroke-width="1.2" opacity="0.6"/>
<line x1="780" y1="179" x2="837" y2="187" stroke="#3f2c15" stroke-width="1.2" opacity="0.6"/>
<line x1="780" y1="182" x2="837" y2="190" stroke="#3f2c15" stroke-width="1.2" opacity="0.6"/>
<line x1="780" y1="185" x2="837" y2="193" stroke="#3f2c15" stroke-width="1.2" opacity="0.6"/>
<line x1="780" y1="188" x2="837" y2="196" stroke="#3f2c15" stroke-width="1.2" opacity="0.6"/>
<line x1="780" y1="191" x2="837" y2="199" stroke="#3f2c15" stroke-width="1.2" opacity="0.6"/>
<line x1="780" y1="194" x2="837" y2="202" stroke="#3f2c15" stroke-width="1.2" opacity="0.6"/>
<line x1="780" y1="197" x2="837" y2="205" stroke="#3f2c15" stroke-width="1.2" opacity="0.6"/>
<line x1="780" y1="200" x2="837" y2="208" stroke="#3f2c15" stroke-width="1.2" opacity="0.6"/>
<line x1="780" y1="203" x2="837" y2="211" stroke="#3f2c15" stroke-width="1.2" opacity="0.6"/>
<line x1="780" y1="206" x2="837" y2="214" stroke="#3f2c15" stroke-width="1.2" opacity="0.6"/>
<line x1="780" y1="209" x2="837" y2="217" stroke="#3f2c15" stroke-width="1.2" opacity="0.6"/>
<line x1="780" y1="212" x2="837" y2="220" stroke="#3f2c15" stroke-width="1.2" opacity="0.6"/>
<line x1="780" y1="215" x2="837" y2="223" stroke="#3f2c15" stroke-width="1.2" opacity="0.6"/>
<line x1="780" y1="218" x2="837" y2="226" stroke="#3f2c15" stroke-width="1.2" opacity="0.6"/>
<circle cx="808.3" cy="189" r="26" fill="none" stroke="#4a361d" stroke-width="1.2" opacity="0.6"/>
</g>
<circle cx="807" cy="190.1" r="13.4" fill="#f2eee4"/>
<g clip-path="url(#holeClip)"><rect x="790" y="170" width="19" height="40" fill="url(#greenTex)"/><rect x="809" y="170" width="19" height="40" fill="url(#pinkTex)"/></g>
<g fill="#275c37">
<polygon points="665.2,232.8 680.2,232.8 701.5,283.5 719.8,232.8 735,232.8 708.9,302.3 694,302.3"/>
<polygon points="740.6,232.8 755,232.8 794.8,283.6 794.8,232.8 807.3,232.8 807.3,302.3 793,302.3 753.75,252 753.75,302.3 740.6,302.3"/>
<rect x="813.3" y="232.8" width="67.2" height="11.7"/><rect x="838.3" y="244" width="14.8" height="58.3"/>
<rect x="916.4" y="265.9" width="37.6" height="11.4"/><rect x="940.9" y="265.9" width="13.1" height="37.1"/>
</g>
<path d="M942.3,250.6 A30,30 0 1 0 947.75,267.8" fill="none" stroke="#275c37" stroke-width="12.7"/>
<g fill="none" stroke="#275c37" stroke-width="2.3" stroke-linecap="round" stroke-linejoin="round">
<path d="M735,334.5 C728,332 716,334 710,340 C706,344 708,347 713,346.5 C722,345 731,340 735.5,334.5 C733,338 730,343 733,344 C740,344 752,337 760,333"/>
<path d="M775,311.5 C771,320 765,334 763,343 C762,347 768,346.5 776,344 C785,341 795,334 798,328.5 C799,325.5 794,325 790,329 C786,333 784,341 789,345 C795,348 808,343 814,337 C822,330 830,322 834.5,317 C836,314.5 832,314 828,316 C821,320 814,333 813,341 C812,347 820,346 827,342.5 C834,339 840,335 842,334 C841,338 842,342 845,343.5 C850,345 858,341 863,338 C868,334 873,330 872.7,328 C872,325.5 866,327 864,331 C861,336 861,342 866,344.5 C873,347 886,341 896,335.5 C900,333 902,330 902,328"/>
<path d="M754.5,323.5 C772,321 790,319 806,318.5"/>
<path d="M901.4,325.5 C901,333 900,340 899,345.4 M900.8,327.3 C906,326 914,326 917,331 C918,335 911,337 905,336.6 C909,340 913,344 916,347.8"/>
</g>
<circle cx="844.3" cy="326.1" r="1.6" fill="#275c37"/>
<rect x="656.50" y="377.60" width="68.30" height="29.80" fill="none" rx="14.9" stroke="#1f5131" stroke-width="1.9"/>
<text x="664.40" y="398.90" font-size="17.4" fill="#1f5131" textLength="52.00" lengthAdjust="spacingAndGlyphs" stroke="#1f5131" stroke-width="0.4">08/03</text>
<text x="734.40" y="398.90" font-size="17.4" fill="#1f5131" textLength="190.00" lengthAdjust="spacingAndGlyphs" stroke="#1f5131" stroke-width="0.4">Bring your own project</text>
<line x1="655.00" y1="419.30" x2="954.00" y2="419.30" stroke="#1f5131" stroke-width="2.1"/>
<rect x="656.50" y="438.20" width="68.30" height="29.80" fill="none" rx="14.9" stroke="#1f5131" stroke-width="1.9"/>
<text x="664.40" y="459.50" font-size="17.4" fill="#1f5131" textLength="52.00" lengthAdjust="spacingAndGlyphs" stroke="#1f5131" stroke-width="0.4">10/03</text>
<text x="734.40" y="459.50" font-size="17.4" fill="#1f5131" textLength="215.00" lengthAdjust="spacingAndGlyphs" stroke="#1f5131" stroke-width="0.4">Parent+kid sewing course</text>
<line x1="655.00" y1="479.90" x2="954.00" y2="479.90" stroke="#1f5131" stroke-width="2.1"/>
<rect x="656.50" y="498.80" width="68.30" height="29.80" fill="none" rx="14.9" stroke="#1f5131" stroke-width="1.9"/>
<text x="664.40" y="520.10" font-size="17.4" fill="#1f5131" textLength="52.00" lengthAdjust="spacingAndGlyphs" stroke="#1f5131" stroke-width="0.4">17/03</text>
<text x="734.40" y="520.10" font-size="17.4" fill="#1f5131" textLength="206.70" lengthAdjust="spacingAndGlyphs" stroke="#1f5131" stroke-width="0.4">Beginners sewing course</text>
<line x1="655.00" y1="540.50" x2="954.00" y2="540.50" stroke="#1f5131" stroke-width="2.1"/>
<rect x="656.50" y="559.40" width="68.30" height="29.80" fill="none" rx="14.9" stroke="#1f5131" stroke-width="1.9"/>
<text x="664.40" y="580.70" font-size="17.4" fill="#1f5131" textLength="52.00" lengthAdjust="spacingAndGlyphs" stroke="#1f5131" stroke-width="0.4">18/03</text>
<text x="734.40" y="580.70" font-size="17.4" fill="#1f5131" textLength="142.50" lengthAdjust="spacingAndGlyphs" stroke="#1f5131" stroke-width="0.4">Reversible jacket</text>
<line x1="655.00" y1="601.10" x2="954.00" y2="601.10" stroke="#1f5131" stroke-width="2.1"/>
<rect x="656.50" y="620.00" width="68.30" height="29.80" fill="none" rx="14.9" stroke="#1f5131" stroke-width="1.9"/>
<text x="664.40" y="641.30" font-size="17.4" fill="#1f5131" textLength="52.00" lengthAdjust="spacingAndGlyphs" stroke="#1f5131" stroke-width="0.4">22/03</text>
<text x="734.40" y="641.30" font-size="17.4" fill="#1f5131" textLength="62.00" lengthAdjust="spacingAndGlyphs" stroke="#1f5131" stroke-width="0.4">Kimono</text>
<line x1="655.00" y1="661.70" x2="954.00" y2="661.70" stroke="#1f5131" stroke-width="2.1"/>
<rect x="789.30" y="440.80" width="39.30" height="37.80" fill="none" stroke="#d8a090" stroke-width="0.7" opacity="0.4"/>
<text x="707.50" y="714.00" font-size="22.6" fill="#275c37" textLength="203.50" lengthAdjust="spacingAndGlyphs" font-weight="bold" stroke="#275c37" stroke-width="0.7">PAPENGRACHT 23</text>
<text x="768.50" y="740.50" font-size="22.6" fill="#275c37" textLength="80.50" lengthAdjust="spacingAndGlyphs" font-weight="bold" stroke="#275c37" stroke-width="0.7">LEIDEN</text>
</svg></body></html>
